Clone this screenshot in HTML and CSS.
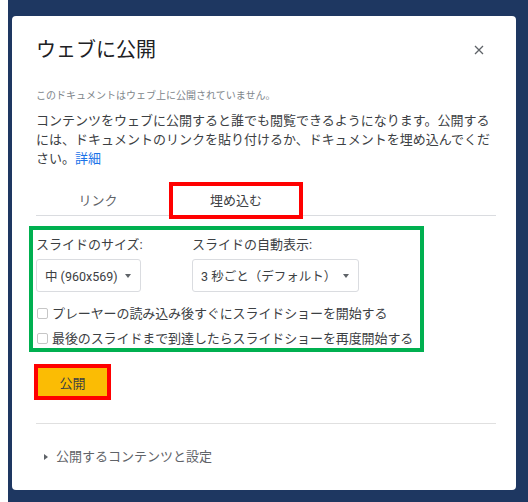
FILE: index.html
```html
<!doctype html>
<html lang="ja">
<head>
    <meta charset="utf-8">
    <meta name="viewport" content="width=device-width, initial-scale=1.0">
    <title>ウェブに公開</title>
    <link rel="stylesheet" href="styles.css">
</head>

<body>
    <div class="backdrop">
        <div class="dialog">
            <div class="dialog-header">
                <h1 class="dialog-title">ウェブに公開</h1>
                <button class="close-button" aria-label="閉じる">
                    <svg width="10" height="10" viewBox="0 0 10 10">
                        <path d="M1 1 L9 9 M9 1 L1 9" stroke="#5f6368" stroke-width="1.3" fill="none"/>
                    </svg>
                </button>
            </div>

            <p class="status">このドキュメントはウェブ上に公開されていません。</p>
            <p class="intro">コンテンツをウェブに公開すると誰でも閲覧できるようになります。公開するには、ドキュメントのリンクを貼り付けるか、ドキュメントを埋め込んでください。<a href="#" class="intro-link">詳細</a></p>

            <div class="tabs">
                <div class="tab">リンク</div>
                <div class="tab tab-active">埋め込む</div>
            </div>

            <!-- 埋め込みの設定 -->
            <div class="embed-options">
                <div class="option-grid">
                    <div class="field">
                        <div class="field-label">スライドのサイズ:</div>
                        <div class="select">中 (960x569)<span class="select-arrow"></span></div>
                    </div>
                    <div class="field">
                        <div class="field-label">スライドの自動表示:</div>
                        <div class="select">3 秒ごと（デフォルト）<span class="select-arrow"></span></div>
                    </div>
                </div>
                <label class="check-row"><span class="checkbox"></span>プレーヤーの読み込み後すぐにスライドショーを開始する</label>
                <label class="check-row"><span class="checkbox"></span>最後のスライドまで到達したらスライドショーを再度開始する</label>
            </div>

            <button class="publish-button">公開</button>

            <div class="divider"></div>

            <div class="details-toggle"><span class="toggle-arrow"></span>公開するコンテンツと設定</div>
        </div>
    </div>
</body>
</html>
```

FILE: styles.css
```css
body {
    margin: 0;
    background-color: #ffffff;
    font-family: Roboto, "Noto Sans CJK JP", sans-serif;
}
.backdrop {
    margin-left: 8px;
    height: 502px;
    background-color: #1e3761;
    padding: 16px 0 0 4px;
    box-sizing: border-box;
}
.dialog {
    width: 504px;
    box-sizing: border-box;
    background: white;
    border-radius: 4px;
    padding: 20px 20px 24px 24px;
}
.dialog-header {
    display: flex;
    align-items: center;
    justify-content: space-between;
    height: 28px;
}
.dialog-title {
    margin: 0;
    font-size: 20px;
    font-weight: normal;
    line-height: 28px;
    color: #202124;
}
.close-button {
    width: 24px;
    height: 24px;
    margin-right: 5px;
    padding: 0;
    border: none;
    background: none;
    display: flex;
    align-items: center;
    justify-content: center;
}
.status {
    margin: 25px 0 0;
    font-size: 10px;
    line-height: 14px;
    color: #80868b;
}
.intro {
    margin: 8px 0 0;
    font-size: 13px;
    line-height: 19px;
    color: #3c4043;
}
.intro-link {
    display: inline-block;
    line-height: 19px;
    color: #1a73e8;
    text-decoration: none;
}
.tabs {
    display: flex;
    margin-top: 18px;
    border-bottom: 1px solid #dadce0;
}
.tab {
    width: 124px;
    height: 29px;
    line-height: 29px;
    text-align: center;
    font-size: 13px;
    color: #5f6368;
}
.tab-active {
    width: 126px;
    margin-left: 13px;
    color: #3c4043;
    outline: 4px solid #ff0000;
}
.embed-options {
    width: 395px;
    box-sizing: border-box;
    margin: 10px 0 0 -7px;
    border: 4px solid #00b050;
    padding: 6px 3px 0;
}
.option-grid {
    display: grid;
    grid-template-columns: 156px auto;
}
.field-label {
    font-size: 13px;
    line-height: 18px;
    color: #3c4043;
}
.select {
    display: inline-flex;
    align-items: center;
    height: 33px;
    box-sizing: border-box;
    margin-top: 5px;
    padding: 0 9px 0 8px;
    border: 1px solid #dadce0;
    border-radius: 3px;
    font-size: 12.5px;
    color: #3c4043;
}
.select-arrow {
    margin-left: 7px;
    border-left: 3.5px solid transparent;
    border-right: 3.5px solid transparent;
    border-top: 4px solid #5f6368;
}
.check-row {
    display: flex;
    align-items: center;
    height: 22px;
    margin-top: 3px;
    font-size: 13px;
    letter-spacing: -0.1px;
    color: #3c4043;
}
.check-row:first-of-type {
    margin-top: 9px;
}
.checkbox {
    width: 11px;
    height: 11px;
    margin: 2px 4px 0 1px;
    border: 1px solid #c6c6c6;
    border-radius: 2px;
    box-sizing: border-box;
}
.publish-button {
    display: block;
    width: 69px;
    height: 28px;
    margin: 16px 0 0 2px;
    border: none;
    background-color: #fbbc04;
    outline: 4px solid #ff0000;
    font-family: inherit;
    font-size: 13px;
    color: #3c4043;
}
.divider {
    height: 1px;
    margin-top: 27px;
    background-color: #e0e0e0;
}
.details-toggle {
    display: flex;
    align-items: center;
    margin-top: 24px;
    font-size: 13px;
    line-height: 18px;
    color: #5f6368;
}
.toggle-arrow {
    margin: 0 8px 0 8px;
    border-top: 3.5px solid transparent;
    border-bottom: 3.5px solid transparent;
    border-left: 4px solid #5f6368;
}
```
